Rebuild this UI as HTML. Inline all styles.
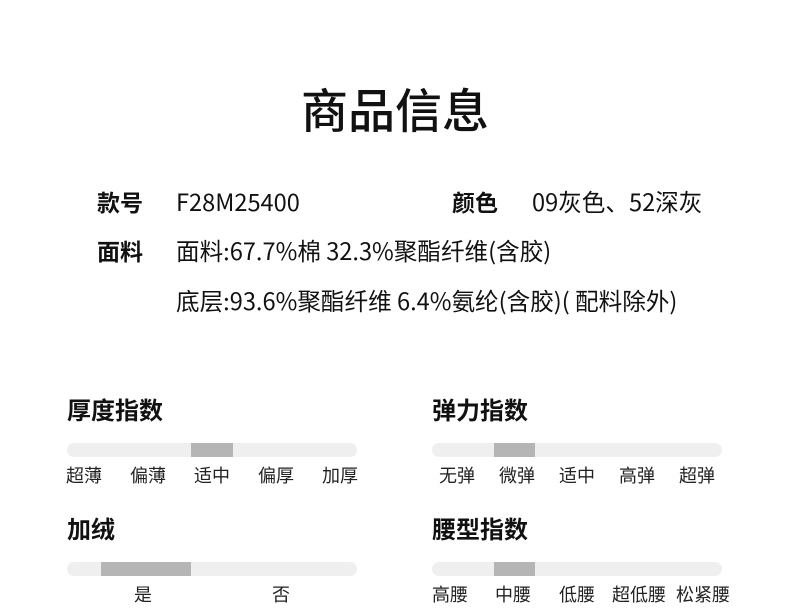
<!DOCTYPE html><html><head><meta charset="utf-8"><style>
body{margin:0;width:790px;height:612px;background:#fff;position:relative;overflow:hidden;font-family:"Noto Sans CJK SC","Liberation Sans",sans-serif;color:#111}
div{position:absolute;white-space:nowrap}
.t{left:0;width:790px;text-align:center;top:75px;font-size:47px;font-weight:500;line-height:66px}
.l{font-size:23px;font-weight:700;line-height:30px}
.v{font-size:23.6px;line-height:30px}
.h{font-size:24px;font-weight:700;line-height:30px}
.bar{height:14px;width:290px;background:#efefef;border-radius:7px;overflow:hidden}
.bar i{position:absolute;top:0;height:14px;background:#b5b5b5}
.s{font-size:18px;line-height:24px;width:80px;text-align:center;color:#222}
</style></head><body>
<div class="t">商品信息</div>
<div class="l" style="left:97px;top:186px">款号</div>
<div class="v" style="left:176px;top:186px">F28M25400</div>
<div class="l" style="left:452px;top:186px">颜色</div>
<div class="v" style="left:532px;top:186px">09灰色、52深灰</div>
<div class="l" style="left:97px;top:235px">面料</div>
<div class="v" style="left:176px;top:235px">面料:67.7%棉 32.3%聚酯纤维(含胶)</div>
<div class="v" style="left:176px;top:285px">底层:93.6%聚酯纤维 6.4%氨纶(含胶)( 配料除外)</div>

<div class="h" style="left:67px;top:394px">厚度指数</div>
<div class="bar" style="left:67px;top:443px"><i style="left:124px;width:42px"></i></div>
<div class="s" style="left:44px;top:463px">超薄</div>
<div class="s" style="left:108px;top:463px">偏薄</div>
<div class="s" style="left:172px;top:463px">适中</div>
<div class="s" style="left:236px;top:463px">偏厚</div>
<div class="s" style="left:300px;top:463px">加厚</div>

<div class="h" style="left:67px;top:513px">加绒</div>
<div class="bar" style="left:67px;top:562px"><i style="left:34px;width:90px"></i></div>
<div class="s" style="left:103px;top:582px">是</div>
<div class="s" style="left:241px;top:582px">否</div>

<div class="h" style="left:432px;top:394px">弹力指数</div>
<div class="bar" style="left:432px;top:443px"><i style="left:62px;width:41px"></i></div>
<div class="s" style="left:417px;top:463px">无弹</div>
<div class="s" style="left:477px;top:463px">微弹</div>
<div class="s" style="left:537px;top:463px">适中</div>
<div class="s" style="left:597px;top:463px">高弹</div>
<div class="s" style="left:657px;top:463px">超弹</div>

<div class="h" style="left:432px;top:513px">腰型指数</div>
<div class="bar" style="left:432px;top:562px"><i style="left:62px;width:41px"></i></div>
<div class="s" style="left:410px;top:582px">高腰</div>
<div class="s" style="left:473px;top:582px">中腰</div>
<div class="s" style="left:537px;top:582px">低腰</div>
<div class="s" style="left:599px;top:582px">超低腰</div>
<div class="s" style="left:663px;top:582px">松紧腰</div>
</body></html>
